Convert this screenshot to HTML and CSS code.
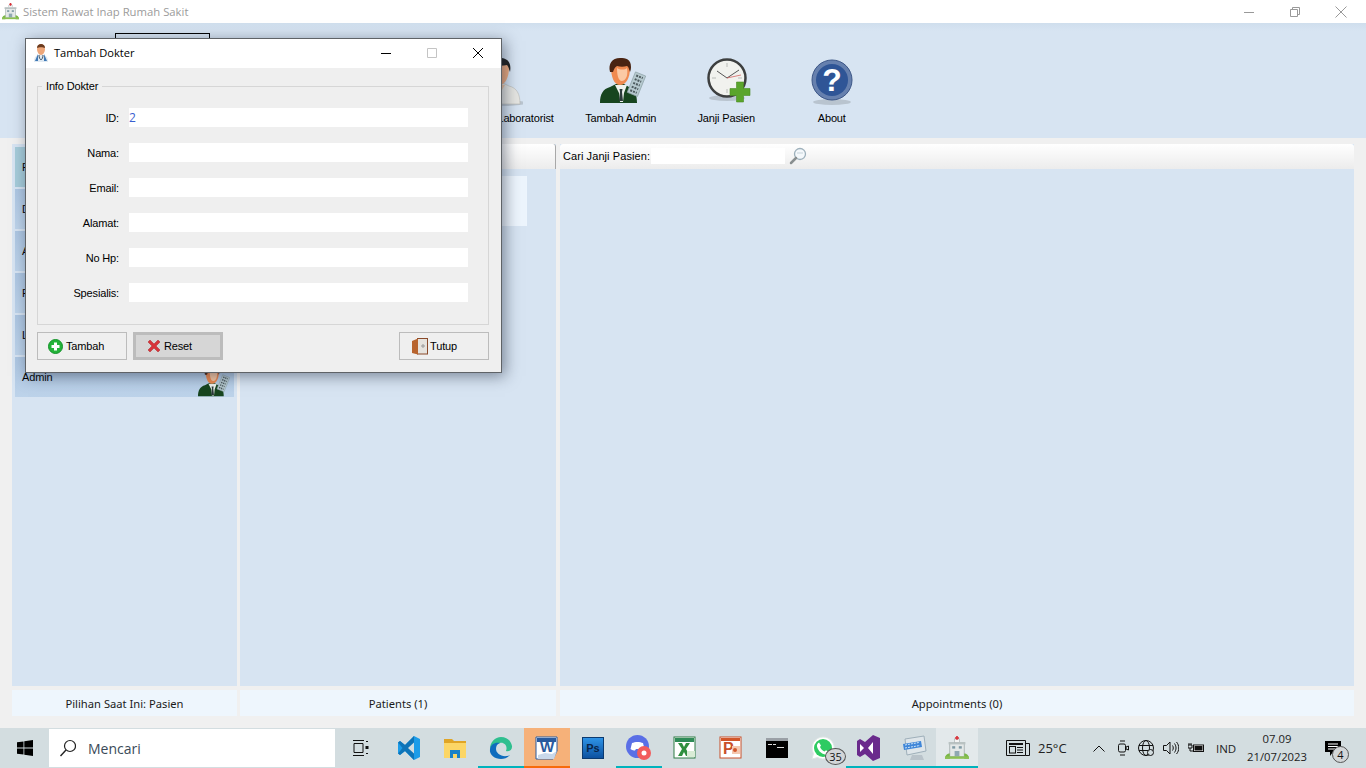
FILE: index.html
```html
<!DOCTYPE html>
<html lang="en">
<head>
  <meta charset="UTF-8">
  <meta name="viewport" content="width=device-width, initial-scale=1.0">
  <title>Sistem Rawat Inap Rumah Sakit</title>
  <link rel="stylesheet" href="styles.css">
</head>
<body>
  <svg class="defs" width="0" height="0">
    <symbol id="hospital" viewBox="0 0 20 20">
      <rect x="4" y="6" width="12" height="11" fill="#e4e8e8" stroke="#9aa5a5" stroke-width=".6"/>
      <rect x="3" y="5" width="14" height="2" fill="#b9c2c2"/>
      <rect x="8" y="2.500" width="4" height="3" fill="#f4f4f4" stroke="#a5adad" stroke-width=".5"/>
      <path d="M9.300 0h1.400v1h1v1.200h-1v1h-1.400v-1h-1v-1.200h1z" fill="#d8323a"/>
      <rect x="6" y="8.500" width="2.500" height="2" fill="#7f9aa5"/>
      <rect x="11.500" y="8.500" width="2.500" height="2" fill="#7f9aa5"/>
      <rect x="8" y="12.500" width="4" height="4.500" fill="#8fa8b2"/>
      <path d="M0 19c0-3 2-4.500 4-4.500v4.500zM20 19c0-3-2-4.500-4-4.500v4.500z" fill="#7ab648"/>
      <rect x="0" y="17" width="20" height="2" fill="#8cc152"/>
    </symbol>
    <symbol id="admin" viewBox="0 0 46 46">
      <path d="M0 45c0-9 3-14 10-16l6-3h8l5 3c6 2 8 8 8 16z" fill="#17451f"/>
      <path d="M15 27l4 8 1 9h3l1-9 3-8z" fill="#eef2ee"/>
      <path d="M19.500 31h3l-.500 3 1 9h-4l1-9z" fill="#2b3a3a"/>
      <path d="M11 9c0-5 4-8 9-8 6 0 10 3 10 9 0 10-4 17-10 17s-9-8-9-18z" fill="#f08a50"/>
      <path d="M17 10c3 2 8 2 10 0 1 6 0 12-5 13-4 0-5-7-5-13z" fill="#fbc9a4"/>
      <path d="M10 14C8 6 12 0 20 0c6 0 11 1 11 9 0 2-.500 4-1 5-1-2-1-5-3-6-3 1-7 1-10 0-2 1-3 3-4 6z" fill="#4a2412"/>
      <g transform="rotate(22 36 26)">
        <rect x="31" y="15" width="11" height="22" fill="#b6c9cf" stroke="#8fa3a9" stroke-width=".7"/>
        <path d="M33 18h7M33 22h7M33 26h7M33 30h7M33 34h7" stroke="#4c5a5e" stroke-width="2" stroke-dasharray="2 1"/>
      </g>
    </symbol>
  </svg>

  <header class="titlebar">
    <div class="app-title">
      <svg width="17" height="17"><use href="#hospital"/></svg>
      <span>Sistem Rawat Inap Rumah Sakit</span>
    </div>
    <div class="win-btns">
      <span class="win-btn"><svg width="12" height="12" viewBox="0 0 12 12"><path d="M1 6.500h10" stroke="#999" fill="none"/></svg></span>
      <span class="win-btn"><svg width="12" height="12" viewBox="0 0 12 12"><path d="M1.500 3.500h7v7h-7zM3.500 3.500v-2h7v7h-2" stroke="#999" fill="none"/></svg></span>
      <span class="win-btn"><svg width="12" height="12" viewBox="0 0 12 12"><path d="M.5.500l11 11M11.500.500l-11 11" stroke="#999" fill="none"/></svg></span>
    </div>
  </header>

  <nav class="toolbar">
    <div class="tool tool-first"><span class="tool-icon"></span><span>Tambah Pasien</span></div>
    <div class="tool tool-active"><span class="tool-icon"></span><span>Tambah Dokter</span></div>
    <div class="tool tool-hidden"><span class="tool-icon"></span><span>Tambah Apoteker</span></div>
    <div class="tool tool-hidden"><span class="tool-icon"></span><span>Tambah Perawat</span></div>
    <div class="tool tool-lab">
      <span class="tool-icon">
        <svg class="lab-svg" width="46" height="48" viewBox="0 0 46 48">
          <ellipse cx="27" cy="45" rx="22" ry="3" fill="#b9c4cf"/>
          <path d="M2 46c0-10 4-16 12-18l6-3h6l6 3c8 2 11 8 11 18z" fill="#e6e6e2" stroke="#b8b8b4" stroke-width=".6"/>
          <path d="M18 27l5 8 5-8z" fill="#f3c9a6"/>
          <path d="M14 10c0-6 4-9 9-9s9 3 9 9c0 9-4 17-9 17s-9-8-9-17z" fill="#f0ac80"/>
          <path d="M13 14C11 4 17 0 23 0s12 3 10 14c-1-2-1-5-3-7-4 1-9 1-13 0-2 2-3 5-4 7z" fill="#20201e"/>
        </svg>
      </span>
      <span>Tambah Laboratorist</span>
    </div>
    <div class="tool">
      <span class="tool-icon"><svg class="admin-svg" width="46" height="46"><use href="#admin"/></svg></span>
      <span>Tambah Admin</span>
    </div>
    <div class="tool">
      <span class="tool-icon">
        <svg class="clock-svg" width="44" height="46" viewBox="0 0 44 46">
          <ellipse cx="20" cy="40" rx="18" ry="3" fill="#b9c4cf"/>
          <circle cx="20" cy="20" r="18.500" fill="#f1f2ee" stroke="#3d3f3f" stroke-width="2.500"/>
          <path d="M20 5v4M20 31v4M5 20h4M31 20h4" stroke="#b9bcb8"/>
          <path d="M20 20L10 13M20 20L32 12" stroke="#555" stroke-width="1" fill="none"/>
          <path d="M20 20l14-3" stroke="#d05050" stroke-width=".7"/>
          <path d="M29.500 24h7v6.500h6.500v7h-6.500v6.500h-7v-6.500h-6.500v-7h6.500z" fill="#5aa52c" stroke="#4a8c22" stroke-width=".6"/>
        </svg>
      </span>
      <span>Janji Pasien</span>
    </div>
    <div class="tool">
      <span class="tool-icon">
        <svg width="46" height="48" viewBox="0 0 46 48">
          <ellipse cx="23" cy="44" rx="19" ry="3" fill="#b9c4cf"/>
          <circle cx="23" cy="22" r="20" fill="#6680ae" stroke="#3c5687" stroke-width="1"/>
          <circle cx="23" cy="22" r="16" fill="#2f5596"/>
          <text x="23" y="33" class="help-mark">?</text>
        </svg>
      </span>
      <span>About</span>
    </div>
  </nav>

  <main class="content">
    <aside class="panel side-panel">
      <div class="side-list">
        <div class="side-item side-item-sel">Pasien</div>
        <div class="side-item">Dokter</div>
        <div class="side-item">Apoteker</div>
        <div class="side-item">Perawat</div>
        <div class="side-item">Lab</div>
        <div class="side-item">Admin<svg width="32" height="32"><use href="#admin"/></svg></div>
      </div>
    </aside>
    <section class="panel mid-panel">
      <div class="panel-head"></div>
      <div class="patient-card"></div>
    </section>
    <section class="panel right-panel">
      <div class="panel-head search-bar">
        <label>Cari Janji Pasien:</label>
        <input class="search-input" type="text">
        <svg width="18" height="18" viewBox="0 0 18 18">
          <circle cx="11" cy="7" r="5.500" fill="#f4f8fb" stroke="#9db0bb" stroke-width="1.300"/>
          <path d="M7 11l-5 5" stroke="#8a8f90" stroke-width="2.500" stroke-linecap="round"/>
          <path d="M8 6h6" stroke="#c6d3da"/>
        </svg>
      </div>
    </section>
    <div class="foot">Pilihan Saat Ini: Pasien</div>
    <div class="foot">Patients (1)</div>
    <div class="foot">Appointments (0)</div>
  </main>

  <footer class="taskbar">
    <span class="start">
      <svg width="16" height="16" viewBox="0 0 16 16"><path d="M0 2.300l6.500-.9v6.200H0zM7.300 1.300L16 0v7.600H7.300zM0 8.400h6.500v6.200L0 13.700zM7.300 8.400H16V16l-8.700-1.300z" fill="#000"/></svg>
    </span>
    <div class="task-search">
      <svg width="16" height="18" viewBox="0 0 16 18"><circle cx="10" cy="7" r="5.500" fill="none" stroke="#222" stroke-width="1.200"/><path d="M6 11l-5.500 6" stroke="#222" stroke-width="1.400"/></svg>
      <span>Mencari</span>
    </div>
    <span class="task-view">
      <svg width="17" height="16" viewBox="0 0 17 16"><path d="M1 .5h11M1 15.500h11M2 3.500h9v9H2z" stroke="#111" fill="none"/><path d="M14 1h2v1h-2zM13.500 6h3v3h-3zM14 13h2v1h-2z" fill="#111"/></svg>
    </span>
    <div class="task-apps">
      <span class="app">
        <svg width="24" height="24" viewBox="0 0 24 24"><path d="M17 0l6 3v18l-6 3-9-9-5 4-2-1.500v-11L3 5l5 4z" fill="#1c9ce8"/><path d="M17 0L8 9 3 5 1 6.500 5.500 12 1 17.500 3 19l5-4 9 9z" fill="#0e74b8"/><path d="M17 6.500L11 12l6 5.500z" fill="#d3dde0"/></svg>
      </span>
      <span class="app">
        <svg width="24" height="20" viewBox="0 0 24 20"><path d="M1 1h8l2 2h12v4H1z" fill="#e0a526"/><path d="M1 5h22v15H1z" fill="#fcd666"/><path d="M7 12h10v8h-3v-4h-4v4H7z" fill="#1a82c8"/></svg>
      </span>
      <span class="app app-run">
        <svg width="24" height="24" viewBox="0 0 24 24"><path d="M12 1c6 0 10 4 11 9 .5 4-3 6-6 5 2-5-2-9-6-8C6 8 2 10 1 13 1 6 6 1 12 1z" fill="#2fbf8f"/><path d="M1 13c1-5 5-7 10-6-3 1-4 3-4 6 0 4 5 8 11 7 1 0 2-.5 3-1-3 3-6 4-9 4C6 23 0 19 1 13z" fill="#0f6cbd"/></svg>
      </span>
      <span class="app app-word">
        <svg width="24" height="24" viewBox="0 0 24 24"><path d="M1 1h21v14l-4 8H1z" fill="#fff" stroke="#2a5a9e"/><rect x="2" y="2" width="19" height="4" fill="#2a5a9e"/><text x="5" y="16" class="word-w">W</text><path d="M3 19l7-2 7 1 5-3-3 8H3z" fill="#c9d8ea"/></svg>
      </span>
      <span class="app">
        <svg width="22" height="22" viewBox="0 0 22 22"><defs><linearGradient id="psg" x1="0" y1="0" x2="0" y2="1"><stop offset="0" stop-color="#2f95e8"/><stop offset="1" stop-color="#0b4f9e"/></linearGradient></defs><rect x=".5" y=".5" width="21" height="21" fill="url(#psg)" stroke="#0b3a70"/><text x="11" y="15" class="ps-mark">Ps</text></svg>
      </span>
      <span class="app">
        <svg width="26" height="26" viewBox="0 0 26 26"><circle cx="11.500" cy="11.500" r="11.500" fill="#5a6fe6"/><path d="M6 8c3-1.500 8-1.500 11 0l1.500 6c-1 1-2.500 1.500-3.500 1.500l-1-1.500h-4l-1 1.500C8 15.500 6 15 4.500 14z" fill="#fff"/><circle cx="18" cy="18" r="7" fill="#f25c5c"/><circle cx="18" cy="18" r="2.500" fill="#fff"/></svg>
      </span>
      <span class="app">
        <svg width="24" height="24" viewBox="0 0 24 24"><rect x="1" y="1" width="21" height="21" fill="#fff" stroke="#2e7d44"/><rect x="2" y="2" width="19" height="4" fill="#2e8b57"/><path d="M5 7h4l2 4 2-4h4l-4 6 4 7h-4l-2-4-2 4H5l4-7z" fill="#2f8f3e"/><path d="M14 15h8v6h-8z" fill="#d9ecd6"/></svg>
      </span>
      <span class="app">
        <svg width="24" height="24" viewBox="0 0 24 24"><rect x="1" y="1" width="21" height="21" fill="#fff" stroke="#c8502a"/><rect x="2" y="2" width="19" height="3" fill="#d2562a"/><text x="4" y="18" class="ppt-mark">P</text><path d="M13 10h8v8h-8z" fill="#f4c8b0"/><circle cx="16" cy="14" r="2" fill="#d2562a"/></svg>
      </span>
      <span class="app">
        <svg width="22" height="20" viewBox="0 0 22 20"><rect width="22" height="20" fill="#000"/><rect width="22" height="3" fill="#9aa0a6"/><path d="M2 6h4v1H2zM7 6h3v1H7zM11 9h7v1h-7z" fill="#ddd"/></svg>
      </span>
      <span class="app app-wa">
        <svg width="24" height="24" viewBox="0 0 24 24"><path d="M12 1a11 11 0 0 0-9.500 16.500L1 23l5.700-1.500A11 11 0 1 0 12 1z" fill="#fff" stroke="#dfe6e6"/><circle cx="12" cy="12" r="9" fill="#2ecb62"/><path d="M8 6.500l2 3-1 1.500c1 2 2.500 3.500 4.500 4.500l1.500-1.300 3 1.800c-.5 2-2 3-4 2.500-4-1-7-4-8-8-.3-1.500.5-3.500 2-4z" fill="#fff"/></svg>
        <em class="count-badge">35</em>
      </span>
      <span class="app">
        <svg width="24" height="26" viewBox="0 0 24 26"><path d="M16 0l7 3v20l-7 3-8-7-5 3-3-2V6l3-2 5 3z" fill="#6a2a8c"/><path d="M16 7l-5 6 5 6zM3 9v8l4-4z" fill="#fff"/></svg>
      </span>
      <span class="app">
        <svg width="26" height="26" viewBox="0 0 26 26"><path d="M3 4l19-3 2 15-19 4z" fill="#dfe6ea" stroke="#9fb0ba"/><path d="M1 9l18-3 1 6-18 3z" fill="#3f86d8"/><path d="M3 10l14-2.500M3 13l15-2.500" stroke="#cfe6f8" stroke-dasharray="2 1"/><path d="M10 20h10l2 5H8z" fill="#b9c3ca"/></svg>
      </span>
      <span class="app app-cur">
        <svg width="24" height="24"><use href="#hospital"/></svg>
      </span>
    </div>
    <div class="tray">
      <svg class="tray-news" width="24" height="16" viewBox="0 0 24 16"><path d="M.5.500h19v15H.5zM19.500 3.500h4v12h-4" fill="none" stroke="#111"/><rect x="3" y="3" width="14" height="2" fill="#111"/><rect x="3.500" y="6.500" width="6" height="6.500" fill="none" stroke="#111"/><path d="M11 7.500h6M11 10h6M11 12.500h6" stroke="#111"/></svg>
      <span class="tray-temp">25°C</span>
      <svg class="tray-chev" width="12" height="7" viewBox="0 0 12 7"><path d="M.5 6.500L6 1l5.500 5.500" fill="none" stroke="#111"/></svg>
      <svg class="tray-ico" width="12" height="16" viewBox="0 0 12 16"><rect x="1.500" y="4" width="7" height="8" rx="1.500" fill="none" stroke="#111"/><path d="M9 7l2.500-1v4L9 9zM3 1h5M3 15h5" stroke="#111" fill="none"/></svg>
      <svg class="tray-ico" width="16" height="16" viewBox="0 0 16 16"><circle cx="8" cy="8" r="7.500" fill="none" stroke="#111"/><ellipse cx="8" cy="8" rx="3.500" ry="7.500" fill="none" stroke="#111"/><path d="M1 5.500h14M1 10.500h14" stroke="#111"/><circle cx="12.500" cy="12.500" r="3" fill="#d3dde0" stroke="#111"/></svg>
      <svg class="tray-ico" width="16" height="14" viewBox="0 0 16 14"><path d="M.5 4.500h3L7 1v12L3.500 9.500h-3zM9.500 4.500c1 1.500 1 3.500 0 5M11.500 2.500c2 3 2 6 0 9M13.500 1c3 3.500 3 8.500 0 12" fill="none" stroke="#111"/></svg>
      <svg class="tray-ico" width="16" height="12" viewBox="0 0 16 12"><path d="M1 1v2M3 1v2M0 3h4v3H0zM2 6v3h3" stroke="#111" fill="none"/><rect x="5.500" y="3" width="10" height="6.500" fill="#fff" stroke="#111"/><rect x="6.500" y="4" width="8" height="4.500" fill="#111"/></svg>
      <span class="tray-lang">IND</span>
      <div class="clock"><span>07.09</span><span>21/07/2023</span></div>
      <span class="notif">
        <svg width="16" height="15" viewBox="0 0 16 15"><path d="M0 0h16v11H8l-3 4v-4H0z" fill="#000"/><path d="M3 3h10M3 5.500h10M3 8h7" stroke="#fff"/></svg>
        <em class="count-badge notif-badge">4</em>
      </span>
    </div>
  </footer>

  <div class="dialog">
    <div class="dlg-title">
      <svg width="16" height="18" viewBox="0 0 16 18">
        <path d="M1 18c0-5 2-7 7-8 5 1 7 3 7 8z" fill="#dfe9f2"/>
        <path d="M5 10l-3 7h3zM11 10l3 7h-3z" fill="#3f78b5"/>
        <path d="M4 5c0-3 2-5 4-5s4 2 4 5-2 6-4 6-4-3-4-6z" fill="#eea77a"/>
        <path d="M4 4c0-3 2-4 4-4s4 1 4 4c-2-1-6-1-8 0z" fill="#6a3a1e"/>
        <path d="M6 11c0 3 1 4 2 5 1-1 2-2 2-5" fill="none" stroke="#456"/>
      </svg>
      <span>Tambah Dokter</span>
      <div class="dlg-btns">
        <span class="dlg-btn"><svg width="12" height="12" viewBox="0 0 12 12"><path d="M1 6.500h10" stroke="#000" fill="none"/></svg></span>
        <span class="dlg-btn"><svg width="12" height="12" viewBox="0 0 12 12"><path d="M1.500 1.500h9v9h-9z" stroke="#c4c4c4" fill="none"/></svg></span>
        <span class="dlg-btn"><svg width="12" height="12" viewBox="0 0 12 12"><path d="M1 1l10 10M11 1L1 11" stroke="#000" fill="none"/></svg></span>
      </div>
    </div>
    <div class="dlg-body">
      <fieldset class="info-group">
        <legend>Info Dokter</legend>
        <div class="form-row"><label>ID:</label><input class="txt txt-id" type="text" value="2"></div>
        <div class="form-row"><label>Nama:</label><input class="txt" type="text"></div>
        <div class="form-row"><label>Email:</label><input class="txt" type="text"></div>
        <div class="form-row"><label>Alamat:</label><input class="txt" type="text"></div>
        <div class="form-row"><label>No Hp:</label><input class="txt" type="text"></div>
        <div class="form-row"><label>Spesialis:</label><input class="txt" type="text"></div>
      </fieldset>
      <div class="dlg-actions">
        <button class="btn" type="button">
          <svg width="15" height="15" viewBox="0 0 15 15"><circle cx="7.500" cy="7.500" r="7" fill="#23b339" stroke="#14932a"/><path d="M6 3.500h3V6h2.500v3H9v2.500H6V9H3.500V6H6z" fill="#fff"/></svg>
          Tambah
        </button>
        <button class="btn btn-hover" type="button">
          <svg width="14" height="14" viewBox="0 0 14 14"><path d="M1 3l2-2 4 4 4-4 2 2-4 4 4 4-2 2-4-4-4 4-2-2 4-4z" fill="#d8343a" stroke="#a8262a" stroke-width=".5"/></svg>
          Reset
        </button>
        <button class="btn btn-close" type="button">
          <svg width="16" height="17" viewBox="0 0 16 17"><rect x="5.500" y=".5" width="10" height="15.500" fill="#e6e3de" stroke="#8a4a2a"/><path d="M0 3l6-2.500v16L0 15z" fill="#b8642e"/><path d="M9 8h4M11 6v4" stroke="#999"/></svg>
          Tutup
        </button>
      </div>
    </div>
  </div>
</body>
</html>
```

FILE: styles.css
```css
html, body {
  margin: 0;
  height: 100%;
}
body {
  position: relative;
  width: 1366px;
  height: 768px;
  overflow: hidden;
  display: flex;
  flex-direction: column;
  background: #f0f0f0;
  font-family: "Liberation Sans", Arial, sans-serif;
  font-size: 11px;
  letter-spacing: -0.15px;
  color: #000;
}
.defs {
  position: absolute;
}

/* main window */
.titlebar {
  height: 23px;
  display: flex;
  justify-content: space-between;
  align-items: center;
  background: #fff;
}
.app-title {
  display: flex;
  align-items: center;
  gap: 4px;
  padding-left: 2px;
  color: #9b9b9b;
  font-family: "Open Sans", sans-serif;
  font-size: 11.300px;
  letter-spacing: 0;
}
.win-btns {
  display: flex;
  padding-right: 2px;
}
.win-btn {
  width: 46px;
  height: 23px;
  display: flex;
  justify-content: center;
  align-items: center;
}

.toolbar {
  height: 115px;
  box-sizing: border-box;
  padding: 10px 0 0 12px;
  display: flex;
  background: linear-gradient(#cfdeed, #d7e4f2 8px);
}
.tool {
  width: 105.500px;
  box-sizing: border-box;
  display: flex;
  flex-direction: column;
  align-items: center;
  white-space: nowrap;
}
.tool-first {
  width: 103px;
}
.tool-active {
  width: 95px;
  height: 97px;
  border: 1px solid #000;
}
.tool-hidden {
  width: 116px;
}
.tool-lab {
  width: 126px;
}
.tool-icon {
  height: 79px;
  padding-top: 25px;
  box-sizing: border-box;
  display: flex;
  justify-content: center;
  align-items: flex-start;
}
.tool-icon svg {
  display: block;
}
.lab-svg {
  margin-right: 10px;
}
.admin-svg {
  margin-left: 4px;
}
.clock-svg {
  margin-left: 6px;
}
.help-mark {
  font: bold 32px "Liberation Sans", sans-serif;
  fill: #fff;
  text-anchor: middle;
}

.content {
  flex: 1;
  display: grid;
  grid-template-columns: 225px 316px 795px;
  grid-template-rows: 542px 26px;
  column-gap: 3px;
  row-gap: 4px;
  padding: 6px 12px 12px;
}
.panel {
  background: #d7e4f2;
}
.side-panel {
  padding: 3px;
}
.side-list {
  display: flex;
  flex-direction: column;
  gap: 2px;
}
.side-item {
  height: 40px;
  box-sizing: border-box;
  padding: 14px 4px 0 7px;
  display: flex;
  justify-content: space-between;
  background: linear-gradient(#adc6e2, #bdd3ea);
}
.side-item-sel {
  background: #a5cbd9;
}
.side-item svg {
  margin-top: -6px;
}
.panel-head {
  height: 25px;
  border-radius: 3px 3px 0 0;
  background: linear-gradient(#fff, #ececec);
}
.mid-panel .panel-head {
  border-right: 1px solid #a8a8a8;
}
.patient-card {
  width: 282px;
  height: 50px;
  margin: 7px 0 0 5px;
  background: #edf5fd;
}
.right-panel {
  margin-left: 1px;
}
.search-bar {
  box-sizing: border-box;
  display: flex;
  align-items: center;
  padding: 0 0 1px 3px;
  letter-spacing: 0.08px;
}
.search-input {
  width: 134px;
  height: 16px;
  box-sizing: border-box;
  margin: 0 4px 0 1px;
  border: 0;
  background: #fff;
}
.foot {
  background: #eef6fd;
  display: flex;
  justify-content: center;
  align-items: center;
  font-family: "Noto Sans", sans-serif;
  font-size: 11.200px;
  letter-spacing: 0;
  color: #1a1a1a;
}
.foot:last-child {
  margin-left: 1px;
}

/* taskbar */
.taskbar {
  height: 40px;
  display: flex;
  align-items: center;
  background: #d3dde0;
  font-family: "Open Sans", sans-serif;
  letter-spacing: 0;
}
.start {
  width: 49px;
  display: flex;
  justify-content: center;
}
.task-search {
  width: 286px;
  height: 38px;
  box-sizing: border-box;
  display: flex;
  align-items: center;
  gap: 12px;
  padding-left: 11px;
  background: #fff;
  font-size: 14px;
  color: #3a4a58;
}
.task-view {
  width: 51px;
  display: flex;
  justify-content: center;
}
.task-apps {
  display: flex;
  height: 40px;
}
.app {
  position: relative;
  width: 46px;
  height: 40px;
  box-sizing: border-box;
  display: flex;
  justify-content: center;
  align-items: center;
}
.app:nth-child(3), .app:nth-child(6), .app:nth-child(11), .app:nth-child(12) {
  box-shadow: inset 0 -2px 0 #00b3bd;
}
.app-word {
  background: #f6b179;
  box-shadow: inset 0 -2px 0 #f76a0c;
}
.app-cur {
  width: 42px;
  margin-left: -2px;
  background: #e3e9eb;
  box-shadow: inset 0 -2px 0 #00b3bd;
}
.word-w {
  font: bold 15px "Liberation Sans", sans-serif;
  fill: #2a5a9e;
}
.ps-mark {
  font: bold 11px "Liberation Sans", sans-serif;
  fill: #08244a;
  text-anchor: middle;
}
.ppt-mark {
  font: bold 16px "Liberation Sans", sans-serif;
  fill: #c8502a;
}
.count-badge {
  position: absolute;
  right: 0;
  bottom: 3px;
  width: 19px;
  height: 15px;
  border-radius: 50%;
  border: 1px solid #555;
  background: #d3d6d8;
  text-align: center;
  font-style: normal;
  font-size: 11px;
  line-height: 15px;
  color: #111;
}
.tray {
  margin-left: 28px;
  display: flex;
  align-items: center;
  color: #222;
  font-size: 12px;
}
.tray-news {
  margin-right: 8px;
}
.tray-temp {
  font-size: 13px;
  width: 55px;
}
.tray-chev {
  margin-right: 12px;
}
.tray-ico {
  margin-right: 9px;
}
.tray-lang {
  margin-left: 3px;
  width: 26px;
  font-size: 11.500px;
}
.clock {
  width: 70px;
  display: flex;
  flex-direction: column;
  align-items: center;
  font-size: 11.300px;
  line-height: 18px;
}
.notif {
  position: relative;
  margin-left: 13px;
  display: flex;
}
.notif-badge {
  right: -8px;
  bottom: -7px;
  width: 15px;
  height: 15px;
}

/* add doctor dialog, floats over the main window */
.dialog {
  position: absolute;
  left: 25px;
  top: 38px;
  width: 477px;
  height: 335px;
  box-sizing: border-box;
  border: 1px solid #5f6367;
  background: #efefef;
  box-shadow: 3px 3px 14px rgba(30, 40, 60, 0.5);
}
.dlg-title {
  height: 29px;
  box-sizing: border-box;
  padding: 0 0 2px 7px;
  display: flex;
  align-items: center;
  gap: 5px;
  background: #fff;
  font-family: "Open Sans", sans-serif;
  font-size: 11.100px;
  letter-spacing: 0;
}
.dlg-btns {
  margin-left: auto;
  display: flex;
}
.dlg-btn {
  width: 46px;
  display: flex;
  justify-content: center;
}
.dlg-body {
  padding: 12px 12px 0 11px;
}
.info-group {
  margin: 0;
  height: 245px;
  box-sizing: border-box;
  padding: 15px 20px 0 0;
  border: 1px solid #d6d6d6;
}
.info-group legend {
  margin-left: 4px;
  padding: 0 4px 0 4px;
  line-height: 13px;
}
.form-row {
  display: grid;
  grid-template-columns: 81px 339px;
  column-gap: 10px;
  align-items: center;
  height: 19px;
  margin-bottom: 16px;
}
.form-row label {
  text-align: right;
}
.txt {
  height: 19px;
  box-sizing: border-box;
  padding: 0;
  border: 0;
  background: #fff;
  font-family: "Open Sans", sans-serif;
  font-size: 12px;
}
.txt-id {
  color: #3a5fd0;
}
.dlg-actions {
  margin-top: 7px;
  display: flex;
  gap: 6px;
}
.btn {
  width: 90px;
  height: 28px;
  box-sizing: border-box;
  padding: 0 0 0 10px;
  display: flex;
  align-items: center;
  gap: 3px;
  border: 1px solid #bcbcbc;
  background: #efefef;
  font-family: "Liberation Sans", Arial, sans-serif;
  font-size: 11px;
  letter-spacing: -0.15px;
  color: #000;
}
.btn-hover {
  padding-left: 11px;
  border: 3px solid #bcbcbc;
  background: #d6d6d6;
}
.btn-close {
  margin-left: auto;
  padding-left: 12px;
  gap: 2px;
}
```
